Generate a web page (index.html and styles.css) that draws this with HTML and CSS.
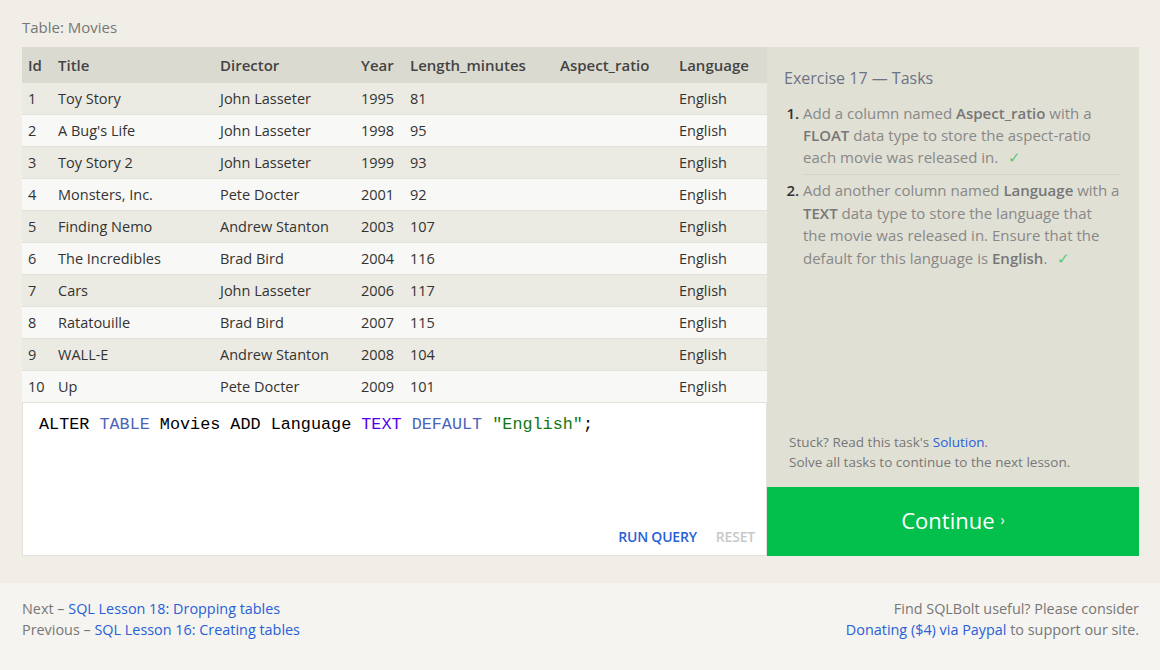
FILE: index.html
```html
<!DOCTYPE html>
<html>
<head>
<meta charset="utf-8">
<link rel="stylesheet" href="styles.css">
</head>
<body>
<div class="main">
  <div class="caption">Table: Movies</div>
  <div class="workspace">
    <div class="left">
      <table class="results">
        <thead>
          <tr><th class="c-id">Id</th><th class="c-title">Title</th><th class="c-dir">Director</th><th class="c-year">Year</th><th class="c-len">Length_minutes</th><th class="c-asp">Aspect_ratio</th><th class="c-lang">Language</th></tr>
        </thead>
        <tbody>
          <tr><td>1</td><td>Toy Story</td><td>John Lasseter</td><td>1995</td><td>81</td><td></td><td>English</td></tr>
          <tr><td>2</td><td>A Bug's Life</td><td>John Lasseter</td><td>1998</td><td>95</td><td></td><td>English</td></tr>
          <tr><td>3</td><td>Toy Story 2</td><td>John Lasseter</td><td>1999</td><td>93</td><td></td><td>English</td></tr>
          <tr><td>4</td><td>Monsters, Inc.</td><td>Pete Docter</td><td>2001</td><td>92</td><td></td><td>English</td></tr>
          <tr><td>5</td><td>Finding Nemo</td><td>Andrew Stanton</td><td>2003</td><td>107</td><td></td><td>English</td></tr>
          <tr><td>6</td><td>The Incredibles</td><td>Brad Bird</td><td>2004</td><td>116</td><td></td><td>English</td></tr>
          <tr><td>7</td><td>Cars</td><td>John Lasseter</td><td>2006</td><td>117</td><td></td><td>English</td></tr>
          <tr><td>8</td><td>Ratatouille</td><td>Brad Bird</td><td>2007</td><td>115</td><td></td><td>English</td></tr>
          <tr><td>9</td><td>WALL-E</td><td>Andrew Stanton</td><td>2008</td><td>104</td><td></td><td>English</td></tr>
          <tr><td>10</td><td>Up</td><td>Pete Docter</td><td>2009</td><td>101</td><td></td><td>English</td></tr>
        </tbody>
      </table>
      <div class="editor">
        <div class="code">ALTER <span class="kw">TABLE</span> Movies ADD Language <span class="ty">TEXT</span> <span class="kw">DEFAULT</span> <span class="str">"English"</span>;</div>
        <div class="actions"><span class="run">RUN QUERY</span><span class="reset">RESET</span></div>
      </div>
    </div>
    <div class="right">
      <div class="tasks">
        <div class="ex-title">Exercise 17 — Tasks</div>
        <ol class="task-list">
          <li>Add a column named <b>Aspect_ratio</b> with a <b>FLOAT</b> data type to store the aspect-ratio each movie was released in. <span class="check">✓</span></li>
          <li>Add another column named <b>Language</b> with a <b>TEXT</b> data type to store the language that<br>the movie was released in. Ensure that the default for this language is <b>English</b>. <span class="check">✓</span></li>
        </ol>
        <div class="spacer"></div>
        <div class="hint">Stuck? Read this task's <a class="link">Solution</a>.<br>Solve all tasks to continue to the next lesson.</div>
      </div>
      <div class="continue">Continue <span class="arrow">›</span></div>
    </div>
  </div>
</div>
<div class="footer">
  <div class="nav">
    <div>Next – <a class="link">SQL Lesson 18: Dropping tables</a></div>
    <div>Previous – <a class="link">SQL Lesson 16: Creating tables</a></div>
  </div>
  <div class="donate">
    <div>Find SQLBolt useful? Please consider</div>
    <div><a class="link">Donating ($4) via Paypal</a> to support our site.</div>
  </div>
</div>
</body>
</html>
```

FILE: styles.css
```css
html, body {
  margin: 0;
  padding: 0;
}
body {
  background: #f5f4f0;
  font-family: "Open Sans", sans-serif;
  color: #444;
  width: 1160px;
  height: 670px;
  overflow: hidden;
}
.main {
  background: #f0eee7;
  padding: 17px 21px 27px 22px;
  height: 539px;
}
.caption {
  font-size: 15px;
  color: #777;
  height: 30px;
  line-height: 20px;
}
.workspace {
  display: flex;
  height: 509px;
}
.left {
  width: 745px;
  display: flex;
  flex-direction: column;
}
.results {
  border-collapse: collapse;
  width: 745px;
  font-size: 14.5px;
  table-layout: fixed;
}
.results th {
  background: #dbdad0;
  text-align: left;
  font-weight: 600;
  color: #444;
  height: 36px;
  padding: 0 0 0 6px;
  font-size: 15px;
}
.results td {
  height: 31px;
  padding: 0 0 0 6px;
  border-bottom: 1px solid #e3e2da;
  color: #333;
}
.results tbody tr:nth-child(odd) td { background: #ecebe3; }
.results tbody tr:nth-child(even) td { background: #f8f8f6; }
.c-id { width: 24px; }
.c-title { width: 156px; }
.c-dir { width: 135px; }
.c-year { width: 43px; }
.c-len { width: 144px; }
.c-asp { width: 113px; }
.c-lang { width: auto; }
.editor {
  flex: 1;
  background: #fff;
  border: 1px solid #e3e2da;
  border-top: none;
  display: flex;
  flex-direction: column;
  padding: 0 11px 9px 16px;
}
.code {
  font-family: "Liberation Mono", monospace;
  font-size: 16.8px;
  color: #000;
  padding-top: 12px;
  flex: 1;
}
.kw { color: #4b64b8; }
.ty { color: #5500ee; }
.str { color: #117711; }
.actions {
  display: flex;
  justify-content: flex-end;
  gap: 19px;
  font-size: 14px;
  font-weight: 600;
  letter-spacing: -0.2px;
}
.run { color: #2860d8; }
.reset { color: #c8c8c8; }
.right {
  width: 372px;
  display: flex;
  flex-direction: column;
}
.tasks {
  flex: 1;
  background: #e1e0d5;
  padding: 20px 18px 15px 17px;
  display: flex;
  flex-direction: column;
}
.ex-title {
  font-size: 16px;
  color: #6d7384;
  margin-bottom: 13px;
}
.task-list {
  margin: 0;
  padding: 0 0 0 19px;
  font-size: 15px;
  line-height: 22px;
  color: #888;
}
.task-list li {
  padding-bottom: 6px;
}
.task-list li + li {
  border-top: 1px solid #d3d2c8;
  padding-top: 4px;
  line-height: 22.7px;
}
.task-list li::marker {
  color: #333;
  font-weight: 600;
}
.task-list b { color: #777; font-weight: 600; }
.check { color: #5ac778; margin-left: 6px; }
.spacer { flex: 1; }
.hint {
  font-size: 13.5px;
  color: #777;
  line-height: 20px;
  padding-left: 5px;
}
.link { color: #2860d8; }
.continue {
  height: 65px;
  padding-bottom: 4px;
  background: #02c04b;
  color: #fff;
  font-size: 22px;
  display: flex;
  align-items: center;
  justify-content: center;
}
.arrow { font-size: 14px; margin-left: 6px; }
.footer {
  display: flex;
  justify-content: space-between;
  padding: 15px 21px 0 22px;
  font-size: 14.4px;
  color: #777;
  line-height: 21px;
}
.donate { text-align: right; }
```
